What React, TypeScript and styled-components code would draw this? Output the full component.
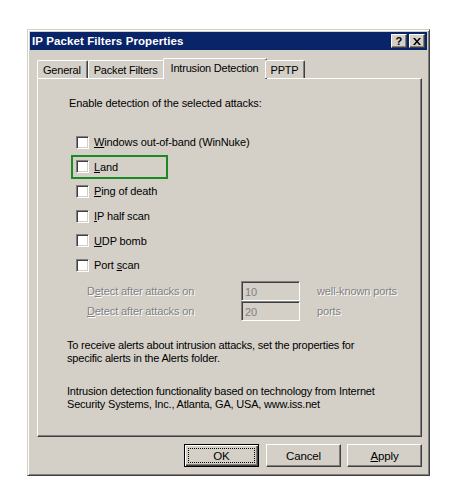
import React from "react"
import styled, { createGlobalStyle } from "styled-components"

const attacks = [
  { key: "W", rest: "indows out-of-band (WinNuke)" },
  { key: "L", rest: "and", highlight: true },
  { key: "P", rest: "ing of death" },
  { key: "I", rest: "P half scan" },
  { key: "U", rest: "DP bomb" },
  { pre: "Port ", key: "s", rest: "can" },
]

const tabs = ["General", "Packet Filters", "Intrusion Detection", "PPTP"]

const GlobalStyle = createGlobalStyle`
  html, body {
    margin: 0;
    padding: 0;
    background: #fff;
  }
  body {
    font-family: "Liberation Sans", Arial, sans-serif;
    font-size: 11px;
    letter-spacing: -0.12px;
    color: #000;
  }
`

const Page = styled.div`
  padding: 29px 0 0 27px;
`

const Window = styled.div`
  width: 403px;
  height: 447px;
  box-sizing: border-box;
  background: #d4d0c8;
  border: 1px solid;
  border-color: #d4d0c8 #404040 #404040 #d4d0c8;
  box-shadow: inset 1px 1px #fff, inset -1px -1px #808080;
  padding: 2px;
  display: flex;
  flex-direction: column;
`

const TitleBar = styled.div`
  height: 18px;
  background: #0a246a;
  color: #fff;
  font-weight: bold;
  font-size: 11.5px;
  letter-spacing: 0.1px;
  display: flex;
  align-items: center;
  justify-content: space-between;
  padding: 0 2px 0 2px;
`

const TitleButtons = styled.div`
  display: flex;
  gap: 2px;
`

const TitleButton = styled.div`
  width: 16px;
  height: 14px;
  box-sizing: border-box;
  background: #d4d0c8;
  border: 1px solid;
  border-color: #fff #404040 #404040 #fff;
  box-shadow: inset -1px -1px #808080;
  color: #000;
  display: flex;
  align-items: center;
  justify-content: center;
  font-size: 11px;
  font-weight: bold;
`

const Body = styled.div`
  padding: 8px 5px 0 7px;
  display: flex;
  flex-direction: column;
`

const TabRow = styled.div`
  display: flex;
  align-items: flex-end;
  height: 20px;
  position: relative;
  z-index: 1;
`

const Tab = styled.div<{ $active?: boolean }>`
  box-sizing: border-box;
  height: ${(p) => (p.$active ? "21px" : "18px")};
  margin: ${(p) => (p.$active ? "0 -2px -1px -2px" : "0")};
  padding: ${(p) => (p.$active ? "2px 7px 0 7px" : "2px 6px 0 5px")};
  background: #d4d0c8;
  border-top: 1px solid #fff;
  border-left: 1px solid #fff;
  border-right: 1px solid #404040;
  border-top-left-radius: 2px;
  border-top-right-radius: 2px;
  box-shadow: inset -1px 0 #808080;
  font-size: 11px;
  letter-spacing: -0.2px;
  line-height: 14px;
  white-space: nowrap;
`

const Panel = styled.div`
  width: 385px;
  height: 359px;
  box-sizing: border-box;
  border: 1px solid;
  border-color: #fff #404040 #404040 #fff;
  box-shadow: inset -1px -1px #808080;
  padding: 18px 0 0 31px;
  font-size: 11px;
`

const Intro = styled.div`
  height: 13px;
  line-height: 13px;
`

const OptionList = styled.div`
  margin: 20px 0 0 2px;
  display: flex;
  flex-direction: column;
`

const Option = styled.div<{ $highlight?: boolean }>`
  height: 24.6px;
  box-sizing: border-box;
  display: flex;
  align-items: center;
  gap: 5px;
  padding-left: 3px;
  border: 2px solid ${(p) => (p.$highlight ? "#1a8a22" : "transparent")};
  width: ${(p) => (p.$highlight ? "97px" : "auto")};
`

const CheckBox = styled.span`
  width: 13px;
  height: 13px;
  box-sizing: border-box;
  background: #fff;
  border: 1px solid;
  border-color: #808080 #fff #fff #808080;
  box-shadow: inset 1px 1px #404040, inset -1px -1px #d4d0c8;
  flex: none;
`

const Key = styled.u`
  text-decoration: underline;
`

const DetectGrid = styled.div`
  display: grid;
  grid-template-columns: 154px 76px auto;
  grid-auto-rows: 20.5px;
  align-items: center;
  margin: 3px 0 0 18px;
  color: #808080;
  text-shadow: 1px 1px #fff;
`

const Field = styled.div`
  width: 59px;
  height: 20px;
  box-sizing: border-box;
  border: 1px solid;
  border-color: #808080 #fff #fff #808080;
  box-shadow: inset 1px 1px #404040, inset -1px -1px #d4d0c8;
  padding: 3px 0 0 3px;
  color: #808080;
  text-shadow: none;
  font-size: 11px;
  line-height: 14px;
`

const Paragraph = styled.p<{ $top: number }>`
  margin: ${(p) => p.$top}px 0 0 -2px;
  line-height: 13px;
  letter-spacing: -0.2px;
`

const ButtonRow = styled.div`
  display: flex;
  justify-content: flex-end;
  gap: 6px;
  margin-top: 7px;
  width: 385px;
`

const Button = styled.div<{ $default?: boolean }>`
  width: 75px;
  height: 23px;
  box-sizing: border-box;
  display: flex;
  align-items: center;
  justify-content: center;
  background: #d4d0c8;
  font-size: 11.5px;
  border: 1px solid;
  border-color: ${(p) =>
    p.$default ? "#000" : "#fff #404040 #404040 #fff"};
  box-shadow: ${(p) =>
    p.$default
      ? "inset 1px 1px #fff, inset -1px -1px #404040, inset -2px -2px #808080"
      : "inset -1px -1px #808080"};
  margin-right: ${(p) => (p.$default ? "1px" : "0")};
`

const FocusRing = styled.span`
  width: 67px;
  height: 15px;
  box-sizing: border-box;
  border: 1px dotted #000;
  display: flex;
  align-items: center;
  justify-content: center;
`

const CloseGlyph = () => (
  <svg width="8" height="7" viewBox="0 0 8 7">
    <path d="M0 0h2l2 2.5L6 0h2L5 3.5 8 7H6L4 4.5 2 7H0l3-3.5z" fill="#000" />
  </svg>
)

const App = () => {
  return (
    <Page>
      <GlobalStyle />
      <Window>
        <TitleBar>
          <span>IP Packet Filters Properties</span>
          <TitleButtons>
            <TitleButton>?</TitleButton>
            <TitleButton>
              <CloseGlyph />
            </TitleButton>
          </TitleButtons>
        </TitleBar>
        <Body>
          <TabRow>
            {tabs.map((t) => (
              <Tab key={t} $active={t === "Intrusion Detection"}>
                {t}
              </Tab>
            ))}
          </TabRow>
          <Panel>
            <Intro>Enable detection of the selected attacks:</Intro>
            <OptionList>
              {attacks.map((a) => (
                <Option key={a.key + a.rest} $highlight={a.highlight}>
                  <CheckBox />
                  <span>
                    {a.pre}
                    <Key>{a.key}</Key>
                    {a.rest}
                  </span>
                </Option>
              ))}
            </OptionList>
            <DetectGrid>
              <span>
                D<Key>e</Key>tect after attacks on
              </span>
              <Field>10</Field>
              <span>well-known ports</span>
              <span>
                <Key>D</Key>etect after attacks on
              </span>
              <Field>20</Field>
              <span>ports</span>
            </DetectGrid>
            <Paragraph $top={17}>
              To receive alerts about intrusion attacks, set the properties for
              <br />
              specific alerts in the Alerts folder.
            </Paragraph>
            <Paragraph $top={20}>
              Intrusion detection functionality based on technology from Internet
              <br />
              Security Systems, Inc., Atlanta, GA, USA, www.iss.net
            </Paragraph>
          </Panel>
          <ButtonRow>
            <Button $default>
              <FocusRing>OK</FocusRing>
            </Button>
            <Button>Cancel</Button>
            <Button>
              <span>
                <Key>A</Key>pply
              </span>
            </Button>
          </ButtonRow>
        </Body>
      </Window>
    </Page>
  )
}

export default App
